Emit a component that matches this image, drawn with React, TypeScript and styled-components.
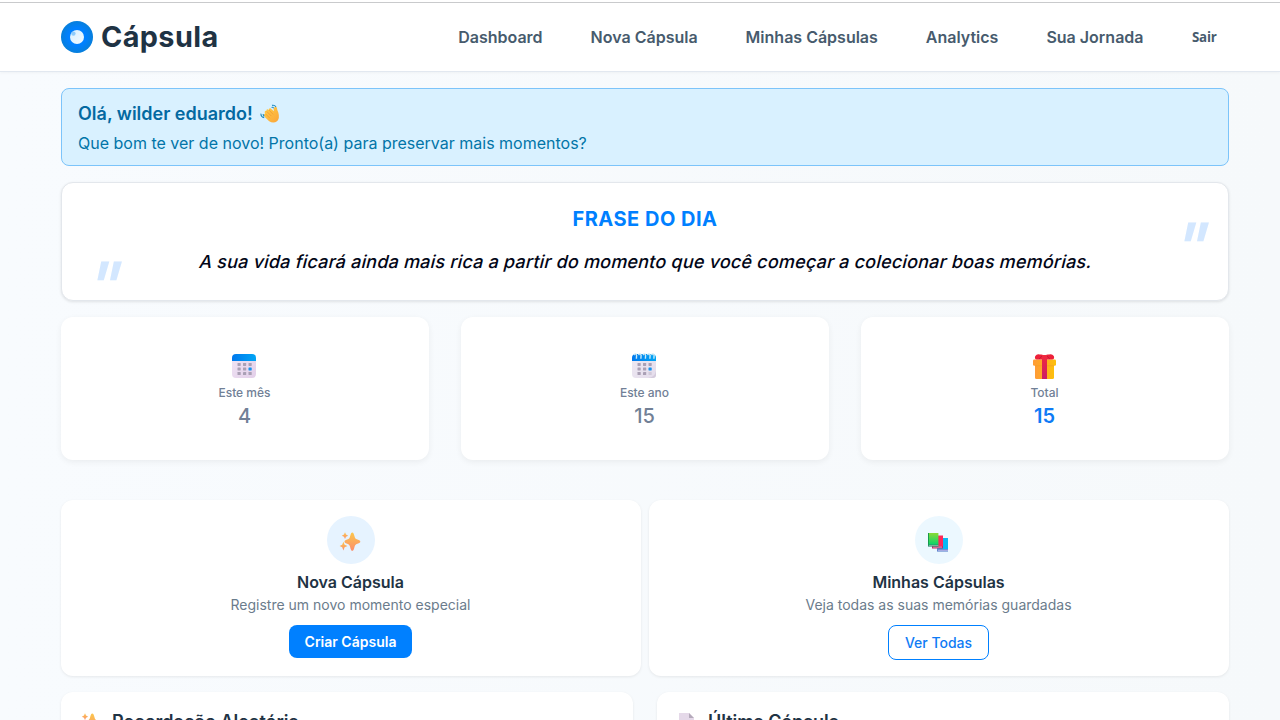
import React from 'react';
import styled, { createGlobalStyle } from 'styled-components';

const GlobalStyle = createGlobalStyle`
  * { box-sizing: border-box; }
  html, body { margin: 0; height: 720px; overflow: hidden; }
  body { background: #f7fafc; font-family: Inter, "Liberation Sans", sans-serif; color: #1f3344; }
  h1, h2, h3, p { margin: 0; }
`;

const Page = styled.div`
  height: 720px;
  overflow: hidden;
  background: linear-gradient(90deg, #f8fbfe, #f6f9fb);
`;

const Header = styled.header`
  height: 72px;
  padding: 2px 63px 0 61px;
  display: flex;
  align-items: center;
  justify-content: space-between;
  background: linear-gradient(#fff 2px, #c9cacc 2px, #c9cacc 3px, #fff 3px);
  border-bottom: 1px solid #e2e8f0;
  box-shadow: 0 1px 3px rgba(0, 0, 0, 0.04);
`;

const Brand = styled.div`
  display: flex;
  align-items: center;
  gap: 8px;
  font-size: 28.8px;
  line-height: 36px;
  font-weight: 700;
  letter-spacing: 0.4px;
  svg { display: block; }
`;

const Nav = styled.nav`
  display: flex;
  align-items: center;
  gap: 48px;
`;

const NavLink = styled.a`
  font-size: 16px;
  line-height: 24px;
  font-weight: 600;
  color: #475b6d;
`;

const LogoutButton = styled.button`
  width: 25.5px;
  border: 0;
  padding: 0;
  background: none;
  font: 700 13.333px/18px "Open Sans", sans-serif;
  letter-spacing: -0.25px;
  color: #475b6d;
`;

const Main = styled.main`
  padding: 16px 51px 0 61px;
  display: flex;
  flex-direction: column;
`;

const Welcome = styled.section`
  height: 78px;
  padding: 12px 16px 0;
  border: 1px solid #7cc4fa;
  border-radius: 8px;
  background: #d9f1ff;
`;

const WelcomeTitle = styled.h2`
  display: flex;
  align-items: center;
  gap: 7px;
  font-size: 18px;
  line-height: 26px;
  font-weight: 600;
  color: #0369a1;
`;

const WelcomeText = styled.p`
  margin-top: 4px;
  font-size: 16px;
  line-height: 24px;
  color: #0275a8;
`;

const QuoteCard = styled.section`
  position: relative;
  height: 119px;
  margin-top: 16px;
  padding-top: 22px;
  border: 1px solid #e3e7ec;
  border-radius: 12px;
  background: #fff;
  box-shadow: 0 1px 3px rgba(0, 0, 0, 0.1);
  text-align: center;
`;

const QuoteTitle = styled.h2`
  font-size: 20px;
  line-height: 28px;
  font-weight: 700;
  letter-spacing: 0.5px;
  color: #0080ff;
`;

const QuoteText = styled.p`
  margin-top: 14px;
  padding-left: 2px;
  font-size: 18px;
  line-height: 30px;
  font-weight: 500;
  letter-spacing: 0.2px;
  color: #020617;
  transform: skewX(-14deg);
`;

const QuoteMark = styled.span<{ $left: number; $top: number }>`
  position: absolute;
  left: ${(p) => p.$left}px;
  top: ${(p) => p.$top}px;
  font-size: 64px;
  line-height: 64px;
  font-weight: 600;
  color: #d3e7ff;
  transform: skewX(-14deg);
`;

const Grid = styled.div<{ $cols: number; $gap: number; $top: number }>`
  display: grid;
  grid-template-columns: repeat(${(p) => p.$cols}, 1fr);
  gap: ${(p) => p.$gap}px;
  margin-top: ${(p) => p.$top}px;
`;

const Card = styled.section`
  border-radius: 12px;
  background: #fff;
  box-shadow: 0 1px 3px rgba(0, 0, 0, 0.08);
`;

const StatCard = styled(Card)`
  height: 143px;
  padding: 35px 1px 0 0;
  display: flex;
  flex-direction: column;
  align-items: center;
  box-shadow: 0 2px 6px rgba(0, 0, 0, 0.06);
  svg { margin-right: 1px; }
`;

const StatLabel = styled.p`
  margin-top: 4px;
  font-size: 12px;
  line-height: 18px;
  font-weight: 500;
  color: #718096;
`;

const StatValue = styled.p<{ $accent?: boolean }>`
  font-size: 20px;
  line-height: 28px;
  font-weight: ${(p) => (p.$accent ? 600 : 500)};
  color: ${(p) => (p.$accent ? '#0f7bf5' : '#718096')};
`;

const ActionCard = styled(Card)`
  height: 176px;
  padding: 16px 1px 0 0;
  display: flex;
  flex-direction: column;
  align-items: center;
`;

const IconDisc = styled.div<{ $tint: string }>`
  width: 48px;
  height: 48px;
  margin-left: 1px;
  padding: 4px 2px 0 0;
  border-radius: 50%;
  display: flex;
  align-items: center;
  justify-content: center;
  background: ${(p) => p.$tint};
`;

const ActionTitle = styled.h3`
  margin-top: 6px;
  font-size: 16px;
  line-height: 24px;
  font-weight: 600;
`;

const ActionText = styled.p`
  font-size: 14px;
  line-height: 22px;
  color: #6b7c8c;
`;

const Button = styled.button<{ $outline?: boolean }>`
  width: ${(p) => (p.$outline ? 101 : 123)}px;
  height: ${(p) => (p.$outline ? 35 : 33)}px;
  margin-top: 9px;
  padding: 0;
  white-space: nowrap;
  border: ${(p) => (p.$outline ? '1px solid #0080ff' : '0')};
  border-radius: 8px;
  background: ${(p) => (p.$outline ? '#fff' : '#0080ff')};
  color: ${(p) => (p.$outline ? '#0f7bf5' : '#fff')};
  font: ${(p) => (p.$outline ? 500 : 600)} 14px/20px Inter, sans-serif;
`;

const PanelCard = styled(Card)`
  height: 200px;
  padding: 18px 20px;
  display: flex;
  align-items: flex-start;
  gap: 11px;
  svg { margin: 2px 0 0 -2px; }
`;

const PanelTitle = styled.h3`
  font-size: 18px;
  line-height: 24px;
  font-weight: 600;
`;

const Logo = () => (
  <svg width="32" height="32" viewBox="0 0 32 32">
    <defs>
      <radialGradient id="ring">
        <stop offset=".55" stopColor="#0080ff" />
        <stop offset="1" stopColor="#077fdb" />
      </radialGradient>
      <linearGradient id="pearl" x1="0" y1="0" x2="1" y2="1">
        <stop stopColor="#d8f0ff" />
        <stop offset="1" stopColor="#f3faff" />
      </linearGradient>
    </defs>
    <circle cx="16" cy="16" r="16" fill="url(#ring)" />
    <circle cx="16" cy="16" r="7" fill="url(#pearl)" />
    <circle cx="12.4" cy="12.6" r="2.2" fill="#8dcbfb" />
  </svg>
);

const Wave = () => (
  <svg width="20" height="20" viewBox="0 0 20 20">
    <defs>
      <linearGradient id="hand" x1="0" y1="0" x2="1" y2="1">
        <stop stopColor="#ffce45" />
        <stop offset="1" stopColor="#fba53a" />
      </linearGradient>
    </defs>
    <path d="M5 13.2 3.9 11.3Q3.6 9.8 5 9.7L4.7 8.2Q4.8 6.6 6.3 6.9Q6.2 5.1 7.8 5.3L8.8 6Q8.8 3.8 10.4 4.2L13.9 7.2Q13 4.3 14.7 3Q16.4 2.3 17 4.2Q17.1 6.2 18.3 8.4Q20 14 17 17.2Q13.4 20 9.2 17.2Z" fill="url(#hand)" />
    <path d="m5.7 10 4.1 4.2M6.7 7.4l4.7 4.7M9.2 6.2l3.9 4.2" stroke="#ee9435" strokeWidth=".7" fill="none" />
    <path d="M1 9.6q-.4 3.4 3.2 4M3.2 10q-.2 1.5 1.1 2.3M11.6 3.4q1.4-.7 2 .8M12 1.4q2.6-.6 4 1.6" stroke="#238dc1" strokeWidth="1.1" fill="none" />
  </svg>
);

const dots = [9, 14.5, 20];

const Calendar = ({ spiral }: { spiral?: boolean }) => {
  const id = spiral ? 'calSpiral' : 'calPlain';
  return (
    <svg width="28" height="28" viewBox="0 0 28 28">
      <defs>
        <linearGradient id={id} x1="0" x2="1">
          <stop stopColor="#0078ed" />
          <stop offset="1" stopColor="#00a6f5" />
        </linearGradient>
        <linearGradient id={`${id}Paper`} x1="0" y1="0" x2="1" y2="1">
          <stop stopColor={spiral ? '#eee9f3' : '#f0e5f5'} />
          <stop offset="1" stopColor={spiral ? '#e4dceb' : '#e3cfe9'} />
        </linearGradient>
      </defs>
      <rect x="2" y="3" width="24" height="23" rx="4" fill={`url(#${id}Paper)`} />
      <path d="M2 9V6a4 4 0 0 1 4-4h16a4 4 0 0 1 4 4v3z" fill={`url(#${id})`} />
      {[12.4, 17, 21.6].map((y, row) =>
        dots.map((x, col) => (
          <rect
            key={`${x}-${y}`}
            x={x - 1.5}
            y={y - 1.5}
            width="3.2"
            height="3"
            rx=".4"
            fill={row === 1 && col === 2 ? '#1692ee' : '#aaa0b5'}
            opacity={spiral && row === 2 && col === 2 ? 0.35 : 1}
          />
        )),
      )}
      {spiral && (
        <>
          <path d="M18 26q7-1 8-7v4q0 3-3 3z" fill="#d5ccdd" />
          {[5.5, 10, 14.5, 19, 23].map((x) => (
            <path key={x} d={`M${x - 1.5} 3q1.8-2.4 2.6 .2l-.2 3.6`} stroke="#cceaf6" strokeWidth="1.4" fill="none" />
          ))}
        </>
      )}
    </svg>
  );
};

const Gift = () => (
  <svg width="28" height="28" viewBox="0 0 28 28">
    <defs>
      <linearGradient id="box" x1="0" x2="1">
        <stop stopColor="#ff9b37" />
        <stop offset="1" stopColor="#fdc00b" />
      </linearGradient>
      <linearGradient id="ribbon" x1="0" y1="0" x2="0" y2="1">
        <stop stopColor="#f12b3c" />
        <stop offset="1" stopColor="#cc1c68" />
      </linearGradient>
    </defs>
    <rect x="5" y="12" width="19" height="15" rx="1.5" fill="url(#box)" />
    <rect x="3" y="7.6" width="23" height="6.2" rx="1.3" fill="url(#box)" />
    <path d="M5 13.8h19" stroke="#f4a124" strokeWidth=".7" />
    <path d="M14.5 7.6H7Q4 7 5.3 4Q7 1.4 10 2.6Q13 1.8 14.5 4.5Q16 1.8 19 2.6Q22 1.4 23.8 4Q25 7 22 7.6Z" fill="#ed2039" />
    <path d="M12 3h5v24h-5z" fill="url(#ribbon)" />
    <path d="m12 4-3 3m8-3 3 3" stroke="#bd1740" strokeWidth=".8" />
  </svg>
);

const Sparkles = ({ id }: { id: string }) => (
  <svg width="22" height="22" viewBox="0 0 22 22">
    <defs>
      <linearGradient id={id} x1="0" y1="0" x2="0" y2="1">
        <stop stopColor="#fcc74c" />
        <stop offset="1" stopColor="#fb8d6c" />
      </linearGradient>
    </defs>
    <g fill={`url(#${id})`}>
      <path d="M13.3 1.4c1 0 1.4.8 2.2 3.9.5 2 1 2.6 2.9 3.3 2.2.8 2.9 1.1 2.9 2.1s-.7 1.2-2.9 2c-1.9.7-2.4 1.3-2.9 3.3-.8 3.1-1.2 3.8-2.2 3.8s-1.4-.7-2.2-3.8c-.5-2-1-2.6-2.9-3.3-2.2-.8-2.7-1-2.7-2s.5-1.3 2.7-2.1c1.9-.7 2.4-1.3 2.9-3.3.8-3.1 1.2-3.9 2.2-3.9Z" />
      <path d="m6 1.3 1 2.3 2.2 1.1L7 5.8l-1 2.3-1-2.3-2.2-1.1L5 3.6Z" />
      <path d="m4.4 10.8 1.2 3 2.9 1.2-2.9 1.3-1.2 3.1-1.2-3.1L.6 15l2.6-1.2Z" />
    </g>
  </svg>
);

const Books = () => (
  <svg width="22" height="22" viewBox="0 0 22 22">
    <defs>
      <linearGradient id="green" x1="0" y1="0" x2="0" y2="1">
        <stop stopColor="#89d936" />
        <stop offset="1" stopColor="#08d36d" />
      </linearGradient>
    </defs>
    <path d="M10 7h11v13H10z" fill="#08b9f4" />
    <path d="M10 18h11v2.6H10z" fill="#5f86cf" />
    <path d="M11 18.8h10v1H11z" fill="#b9b4e6" />
    <path d="M5 4.5h11V16H5z" fill="#ff2859" />
    <path d="M5 15h11v2.5H5z" fill="#c52865" />
    <path d="M6 15.6h9v.9H6z" fill="#dfa2c6" />
    <path d="M1 2h10.4v12H1z" fill="url(#green)" />
    <path d="M1 2h1v13H1z" fill="#159b4b" />
    <path d="M1 13.6h10.4v2H1z" fill="#2a8f6d" />
    <path d="M2 14h9.4v.7H2z" fill="#a9c0ac" />
  </svg>
);

const Sheet = () => (
  <svg width="22" height="22" viewBox="0 0 22 22">
    <path d="M4 1h10l5 5v15H4z" fill="#e5d9e9" />
    <path d="M14 1v5h5z" fill="#b5aabb" />
    <path d="M7 9h9M7 12h9M7 15h9" stroke="#998da5" />
  </svg>
);

const links = ['Dashboard', 'Nova Cápsula', 'Minhas Cápsulas', 'Analytics', 'Sua Jornada'];

export default function App() {
  return (
    <Page>
      <GlobalStyle />
      <Header>
        <Brand><Logo />Cápsula</Brand>
        <Nav>
          {links.map((label) => <NavLink key={label}>{label}</NavLink>)}
          <LogoutButton>Sair</LogoutButton>
        </Nav>
      </Header>
      <Main>
        <Welcome>
          <WelcomeTitle>Olá, wilder eduardo! <Wave /></WelcomeTitle>
          <WelcomeText>Que bom te ver de novo! Pronto(a) para preservar mais momentos?</WelcomeText>
        </Welcome>
        <QuoteCard>
          <QuoteTitle>FRASE DO DIA</QuoteTitle>
          <QuoteMark $left={27} $top={70}>"</QuoteMark>
          <QuoteText>A sua vida ficará ainda mais rica a partir do momento que você começar a colecionar boas memórias.</QuoteText>
          <QuoteMark $left={1114} $top={31}>"</QuoteMark>
        </QuoteCard>
        <Grid $cols={3} $gap={32} $top={16}>
          <StatCard><Calendar /><StatLabel>Este mês</StatLabel><StatValue>4</StatValue></StatCard>
          <StatCard><Calendar spiral /><StatLabel>Este ano</StatLabel><StatValue>15</StatValue></StatCard>
          <StatCard><Gift /><StatLabel>Total</StatLabel><StatValue $accent>15</StatValue></StatCard>
        </Grid>
        <Grid $cols={2} $gap={8} $top={40}>
          <ActionCard>
            <IconDisc $tint="#e6f3ff"><Sparkles id="sparkDisc" /></IconDisc>
            <ActionTitle>Nova Cápsula</ActionTitle>
            <ActionText>Registre um novo momento especial</ActionText>
            <Button>Criar Cápsula</Button>
          </ActionCard>
          <ActionCard>
            <IconDisc $tint="#ecf8ff"><Books /></IconDisc>
            <ActionTitle>Minhas Cápsulas</ActionTitle>
            <ActionText>Veja todas as suas memórias guardadas</ActionText>
            <Button $outline>Ver Todas</Button>
          </ActionCard>
        </Grid>
        <Grid $cols={2} $gap={24} $top={16}>
          <PanelCard><Sparkles id="sparkPanel" /><PanelTitle>Recordação Aleatória</PanelTitle></PanelCard>
          <PanelCard><Sheet /><PanelTitle>Última Cápsula</PanelTitle></PanelCard>
        </Grid>
      </Main>
    </Page>
  );
}
